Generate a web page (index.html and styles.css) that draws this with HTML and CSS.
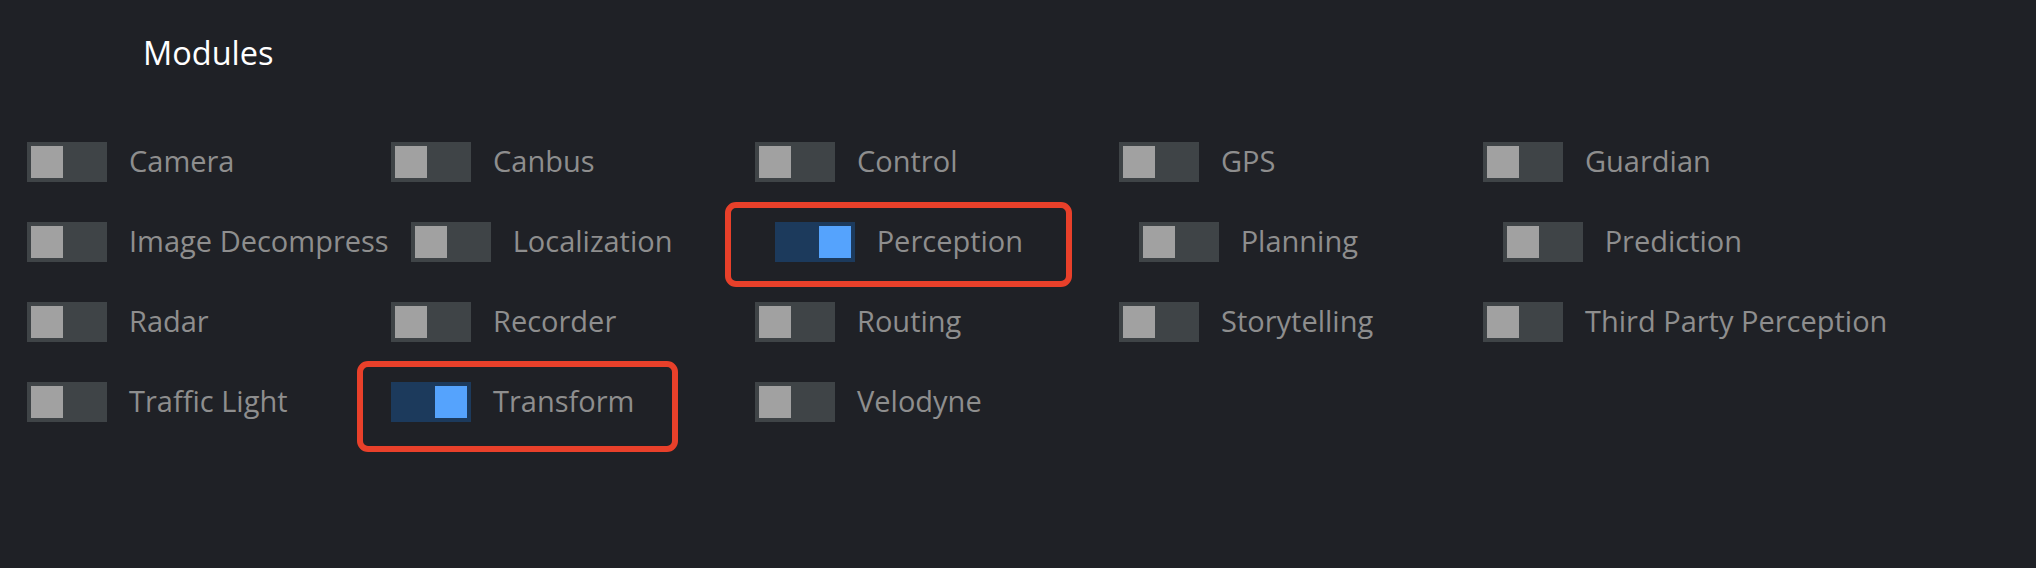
FILE: index.html
```html
<!DOCTYPE html>
<html lang="en">
<head>
<meta charset="utf-8">
<title>Modules</title>
<link rel="stylesheet" href="styles.css">
</head>
<body>
<div class="panel">
  <h2 class="title">Modules</h2>
  <div class="modules">
    <div class="module"><span class="toggle"><span class="knob"></span></span><span class="label">Camera</span></div>
    <div class="module"><span class="toggle"><span class="knob"></span></span><span class="label">Canbus</span></div>
    <div class="module"><span class="toggle"><span class="knob"></span></span><span class="label">Control</span></div>
    <div class="module"><span class="toggle"><span class="knob"></span></span><span class="label">GPS</span></div>
    <div class="module"><span class="toggle"><span class="knob"></span></span><span class="label">Guardian</span></div>

    <div class="module"><span class="toggle"><span class="knob"></span></span><span class="label">Image Decompress</span></div>
    <div class="module"><span class="toggle"><span class="knob"></span></span><span class="label">Localization</span></div>
    <div class="module"><span class="toggle on"><span class="knob"></span></span><span class="label">Perception</span><span class="mark mark-perception"></span></div>
    <div class="module"><span class="toggle"><span class="knob"></span></span><span class="label">Planning</span></div>
    <div class="module"><span class="toggle"><span class="knob"></span></span><span class="label">Prediction</span></div>

    <div class="module"><span class="toggle"><span class="knob"></span></span><span class="label">Radar</span></div>
    <div class="module"><span class="toggle"><span class="knob"></span></span><span class="label">Recorder</span></div>
    <div class="module"><span class="toggle"><span class="knob"></span></span><span class="label">Routing</span></div>
    <div class="module"><span class="toggle"><span class="knob"></span></span><span class="label">Storytelling</span></div>
    <div class="module"><span class="toggle"><span class="knob"></span></span><span class="label">Third Party Perception</span></div>

    <div class="module"><span class="toggle"><span class="knob"></span></span><span class="label">Traffic Light</span></div>
    <div class="module"><span class="toggle on"><span class="knob"></span></span><span class="label">Transform</span><span class="mark mark-transform"></span></div>
    <div class="module"><span class="toggle"><span class="knob"></span></span><span class="label">Velodyne</span></div>
  </div>
</div>
</body>
</html>
```

FILE: styles.css
```css
html, body {
  margin: 0;
  padding: 0;
  background: #1f2126;
  width: 2036px;
  height: 568px;
  overflow: hidden;
}

.panel {
  font-family: "Open Sans", "Noto Sans", sans-serif;
  padding: 31px 0 0 27px;
}

.title {
  margin: 0 0 67px 116px;
  font-size: 32.5px;
  line-height: 44px;
  font-weight: 400;
  color: #ffffff;
}

.modules {
  display: flex;
  flex-wrap: wrap;
  row-gap: 40px;
}

.module {
  position: relative;
  display: flex;
  align-items: center;
  gap: 22px;
  min-width: 364px;
  padding-right: 22px;
  box-sizing: border-box;
}

.toggle {
  display: flex;
  justify-content: flex-start;
  box-sizing: border-box;
  width: 80px;
  height: 40px;
  padding: 4px;
  background: #3f4447;
  flex: none;
}

.toggle .knob {
  width: 32px;
  height: 32px;
  background: #a1a1a1;
}

.toggle.on {
  justify-content: flex-end;
  background: #1c3a5c;
}

.toggle.on .knob {
  background: #55a3fd;
}

.label {
  font-size: 29px;
  line-height: 40px;
  color: #8e8e8e;
  white-space: nowrap;
  position: relative;
  top: -1px;
}

.mark {
  position: absolute;
  box-sizing: border-box;
  border: 6px solid #e8402a;
  border-radius: 11px;
  pointer-events: none;
}

.mark-perception {
  left: -50px;
  top: -20px;
  width: 347px;
  height: 85px;
}

.mark-transform {
  left: -34px;
  top: -21px;
  width: 321px;
  height: 91px;
}
```
